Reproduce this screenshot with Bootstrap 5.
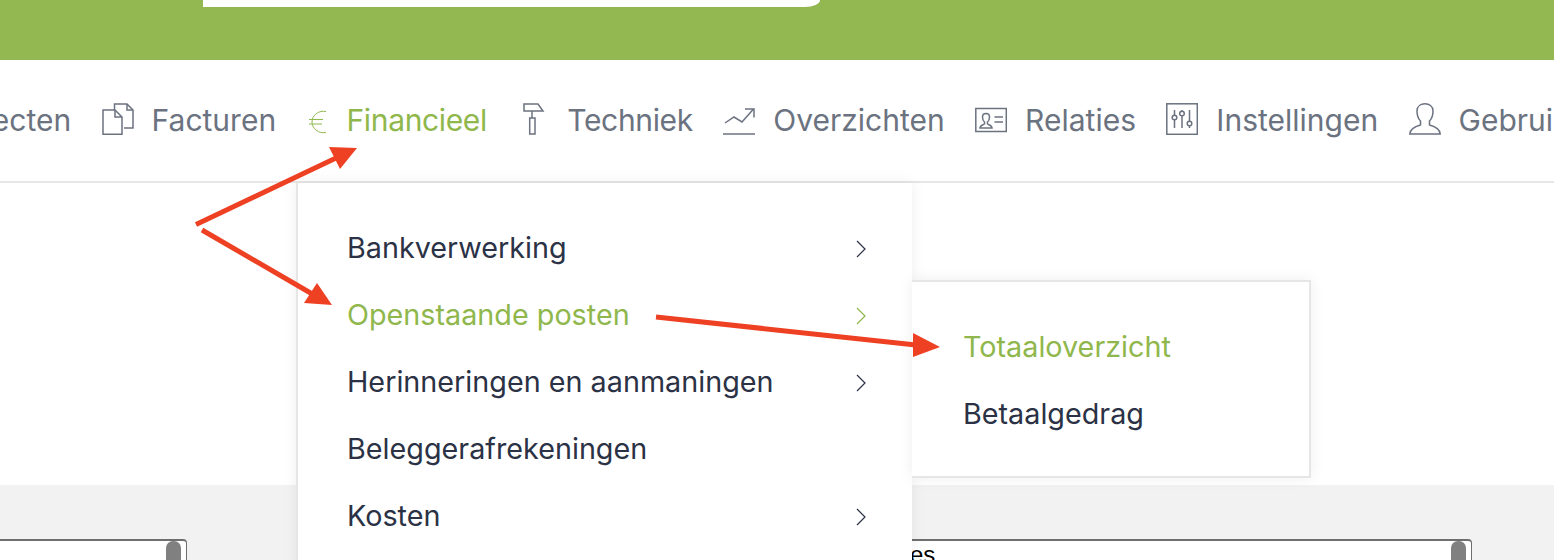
<!DOCTYPE html>
<html lang="nl">
<head>
  <meta charset="UTF-8">
  <title>Financieel</title>
  <meta name="viewport" content="width=device-width, initial-scale=1">
  <link href="https://cdn.jsdelivr.net/npm/bootstrap@5.3.3/dist/css/bootstrap.min.css" rel="stylesheet">
  <style>
    body { font-family: Inter, "Liberation Sans", sans-serif; background: #fff; }
    .app-page { height: 560px; width: 1554px; overflow: hidden; }
    .app-top { height: 60px; background: #93b751; padding-left: 203px; }
    .app-search { width: 617px; height: 7px; background: #fff; border-bottom-right-radius: 15px 7px; }
    .app-nav { height: 123px; border-bottom: 2px solid #e6e6e6; flex-wrap: nowrap; gap: 30.4px; margin-left: -63.4px; width: 1700px; padding-top: 43px; }
    .app-link { display: flex; gap: 18px; align-items: center; height: 32px; padding: 0; font-size: 30px; color: #6b7280; white-space: nowrap; }
    .app-link span { margin-top: 2px; }
    .app-link svg { flex: none; fill: none; stroke: currentColor; stroke-width: 1.5; }
    .app-link.is-on { color: #8fb74c; }
    .app-link.is-on svg { stroke-width: 1; }
    .app-link .app-tight { letter-spacing: -.35px; }
    .app-white { height: 302px; }
    .app-grey { height: 75px; background: #f2f2f2; padding-top: 54px; overflow: hidden; }
    .app-box { height: 60px; background: #fff; border: 1px solid #6e6e6e; border-top-width: 2px; border-left: 0; border-radius: 0 4px 0 0; color: #000; font-family: "Liberation Sans", sans-serif; font-size: 24px; line-height: 28px; }
    .app-box-left { width: 187px; }
    .app-box-right { width: 872px; margin-left: 413px; padding-left: 310px; }
    .app-thumb { top: 0; right: 5px; width: 15px; height: 40px; background: #808080; border-radius: 7px 7px 0 0; }
    .app-menu { display: block; margin: 0; padding: 31px 0; border: 0; border-left: 2px solid #e6e6e6; border-radius: 0; font-size: 28.75px; box-shadow: 0 0 14px rgba(0, 0, 0, .07); }
    .app-menu-main { left: 296px; top: 183px; width: 616px; height: 420px; z-index: 5; }
    .app-menu-sub { left: 912px; top: 280px; width: 399px; height: 198px; z-index: 6; border: 2px solid #e6e6e6; border-left: 0; padding: 31px 0; }
    .app-menu .dropdown-item { display: flex; justify-content: space-between; align-items: center; height: 67px; padding: 0 46px 0 49px; color: #2b3245; }
    .app-menu-sub .dropdown-item { padding-left: 51px; }
    .app-menu .dropdown-item.is-on { color: #8fb74c; background: none; }
    .app-menu svg { fill: none; stroke: currentColor; stroke-width: 1.2; margin-top: 2px; }
    .app-arrows { left: 0; top: 0; z-index: 10; pointer-events: none; }
  </style>
</head>
<body>

<div class="app-page position-relative">
  <div class="app-top">
    <div class="app-search"></div>
  </div>

  <nav class="nav app-nav">
    <a class="nav-link app-link" href="#"><span>Projecten</span></a>
    <a class="nav-link app-link" href="#">
      <svg width="32" height="32" viewBox="0 0 32 32"><path d="M1 7H13L20 14V31.2H1Z"/><path d="M13 7V14H20"/><path d="M12.5 7V1H25L31 7V25H22"/><path d="M25 1V7H31"/></svg>
      <span>Facturen</span>
    </a>
    <a class="nav-link app-link is-on" href="#">
      <svg width="22" height="32" viewBox="0 0 22 32"><path d="M19 8.5C12 7 5 12 5 19C5 26 12 31 19 29.5"/><path d="M2 16.5H16M2 21H15"/></svg>
      <span class="app-tight">Financieel</span>
    </a>
    <a class="nav-link app-link" href="#">
      <svg width="32" height="32" viewBox="0 0 32 32"><path d="M7 1H21L26 8H7Z"/><path d="M15 8V15"/><rect x="12.7" y="15" width="5.3" height="16"/></svg>
      <span class="app-tight">Techniek</span>
    </a>
    <a class="nav-link app-link" href="#">
      <svg width="32" height="32" viewBox="0 0 32 32"><path d="M0 31H32"/><path d="M2 20L11 14L19 19L30.5 6"/><path d="M22 6H31V14.5"/></svg>
      <span>Overzichten</span>
    </a>
    <a class="nav-link app-link" href="#">
      <svg width="32" height="32" viewBox="0 0 32 32"><rect x="0.8" y="5.5" width="30.5" height="23"/><path d="M5 25C5 22 8 22 9.5 21V19C8 18 7.5 16 7.5 14C7.5 12 9 10.5 11 10.5S14.5 12 14.5 14C14.5 16 14 18 12.5 19V21C14 22 17 22 17 25Z"/><path d="M19.500 14H28M19.500 19H28"/></svg>
      <span>Relaties</span>
    </a>
    <a class="nav-link app-link" href="#">
      <svg width="32" height="32" viewBox="0 0 32 32"><rect x="0.8" y="0.8" width="30.500" height="30.500"/><path d="M8.500 7V12M8.500 17V25M16 7V8M16 13V25M23.500 7V18M23.500 23V25"/><circle cx="8.500" cy="14.500" r="2.300"/><circle cx="16" cy="10.500" r="2.300"/><circle cx="23.500" cy="20.500" r="2.300"/></svg>
      <span>Instellingen</span>
    </a>
    <a class="nav-link app-link" href="#">
      <svg width="32" height="32" viewBox="0 0 32 32"><path d="M.8 31H31.200C31 26 26 23.500 20.500 22V18C23 15.500 24 12 24 8C24 3 20 .8 16 .8S8 3 8 8C8 12 9 15.500 11.500 18V22C6 23.500 1 26 .8 31Z"/></svg>
      <span>Gebruikers</span>
    </a>
  </nav>

  <div class="app-white"></div>
  <div class="app-grey d-flex">
    <div class="app-box app-box-left position-relative"><div class="app-thumb position-absolute"></div></div>
    <div class="app-box app-box-right position-relative">es<div class="app-thumb position-absolute"></div></div>
  </div>

  <div class="dropdown-menu app-menu app-menu-main position-absolute">
    <a class="dropdown-item" href="#">Bankverwerking
      <svg width="10" height="18" viewBox="0 0 10 18"><path d="M1 1L9 9L1 17"/></svg></a>
    <a class="dropdown-item is-on" href="#">Openstaande posten
      <svg width="10" height="18" viewBox="0 0 10 18"><path d="M1 1L9 9L1 17"/></svg></a>
    <a class="dropdown-item" href="#">Herinneringen en aanmaningen
      <svg width="10" height="18" viewBox="0 0 10 18"><path d="M1 1L9 9L1 17"/></svg></a>
    <a class="dropdown-item" href="#">Beleggerafrekeningen</a>
    <a class="dropdown-item" href="#">Kosten
      <svg width="10" height="18" viewBox="0 0 10 18"><path d="M1 1L9 9L1 17"/></svg></a>
  </div>

  <div class="dropdown-menu app-menu app-menu-sub position-absolute">
    <a class="dropdown-item is-on" href="#">Totaaloverzicht</a>
    <a class="dropdown-item" href="#">Betaalgedrag</a>
  </div>

  <svg class="app-arrows position-absolute" width="1554" height="560" viewBox="0 0 1554 560">
    <g fill="#ee4023" stroke="#ee4023">
      <path d="M196 224.500L336 158" stroke-width="5" fill="none"/>
      <path d="M357 148L329 147L340 169Z" stroke-width="0"/>
      <path d="M202 230L314 295" stroke-width="5" fill="none"/>
      <path d="M332 305L317 283L304 303Z" stroke-width="0"/>
      <path d="M656 317L916 345" stroke-width="5" fill="none"/>
      <path d="M940 347L913 333V357Z" stroke-width="0"/>
    </g>
  </svg>
</div>

<script src="https://cdn.jsdelivr.net/npm/bootstrap@5.3.3/dist/js/bootstrap.bundle.min.js"></script>
</body>
</html>
